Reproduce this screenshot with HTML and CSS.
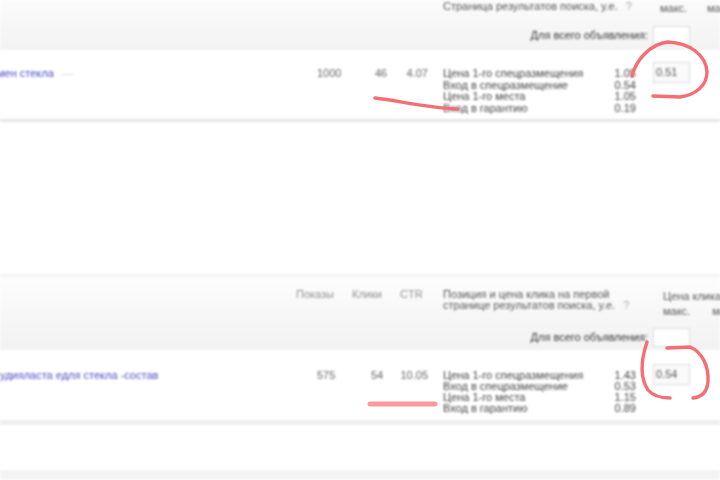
FILE: index.html
```html
<!DOCTYPE html>
<html>
  <head>
    <title>Объявления</title>
    <link rel="stylesheet" href="styles.css">
  </head>
  <body>
    <div class="page">
      <div class="blurred">
        <!-- first group -->
        <div class="head head-short">
          <div class="cols cols-first">
            <div class="pos-title">Страница результатов поиска, у.е. <span class="hint">?</span></div>
            <div class="max-cell">макс.</div>
            <div class="max-cell">макс.</div>
          </div>
          <div class="all-ads">Для всего объявления: <span class="box"></span></div>
        </div>
        <div class="row row-first">
          <div class="ad-link">мен стекла <span class="tag">—</span></div>
          <div class="num">1000</div>
          <div class="num clicks">46</div>
          <div class="num ctr">4.07</div>
          <ul class="prices">
            <li><span>Цена 1-го спецразмещения</span><span>1.05</span></li>
            <li><span>Вход в спецразмещение</span><span>0.54</span></li>
            <li><span>Цена 1-го места</span><span>1.05</span></li>
            <li><span>Вход в гарантию</span><span>0.19</span></li>
          </ul>
          <div class="bid">0.51</div>
        </div>
        <div class="gap"></div>
        <!-- second group -->
        <div class="head head-full">
          <div class="cols cols-second">
            <div class="col-name col-shows">Показы</div>
            <div class="col-name">Клики</div>
            <div class="col-name">CTR</div>
            <div class="pos-title">Позиция и цена клика на первой<br>странице результатов поиска, у.е. <span class="hint">?</span></div>
            <div class="price-title">Цена клика<br><span class="max-cell">макс.</span><span class="max-cell max-next">макс.</span></div>
          </div>
          <div class="all-ads">Для всего объявления: <span class="box"></span></div>
        </div>
        <div class="row row-second">
          <div class="ad-link">удияласта едля стекла -состав</div>
          <div class="num">575</div>
          <div class="num">54</div>
          <div class="num ctr">10.05</div>
          <ul class="prices">
            <li><span>Цена 1-го спецразмещения</span><span>1.43</span></li>
            <li><span>Вход в спецразмещение</span><span>0.53</span></li>
            <li><span>Цена 1-го места</span><span>1.15</span></li>
            <li><span>Вход в гарантию</span><span>0.89</span></li>
          </ul>
          <div class="bid">0.54</div>
        </div>
        <div class="gap gap-last"></div>
        <div class="foot"></div>
      </div>

      <!-- red pen marks drawn on top of the screenshot -->
      <svg class="marks" width="720" height="480" viewBox="0 0 720 480">
        <path d="M375 98 C400 101 430 108 458 109" />
        <path d="M632 76 C636 60 650 44 668 42 C690 43 706 55 707 72 C707 86 695 95 680 97 L653 96" />
        <path class="thick" d="M370 404 L435 404" />
        <path d="M647 342 C641 360 640 378 648 390 C654 397 662 398 670 398" />
        <path d="M667 348 L690 347 C702 352 709 366 708 382 C707 392 702 397 693 398" />
      </svg>
    </div>
  </body>
</html>
```

FILE: styles.css
```css
html,
body {
  margin: 0;
  padding: 0;
  background: #fff;
}

.page {
  position: relative;
  width: 720px;
  height: 480px;
  overflow: hidden;
  font-family: "Liberation Sans", Arial, sans-serif;
  font-size: 11px;
  line-height: 11px;
  color: #555;
}

.blurred {
  filter: blur(1px);
}

.head {
  box-sizing: border-box;
}

.head-short {
  height: 50px;
  background: linear-gradient(#fbfbfb, #f3f3f3);
}

.head-full {
  height: 73px;
  padding-top: 12px;
  background: linear-gradient(#fdfdfd, #f2f2f2);
}

.cols {
  display: grid;
  align-items: start;
  white-space: nowrap;
}

.cols-first {
  grid-template-columns: 660px 47px 13px;
  height: 26px;
  padding-top: 3px;
  box-sizing: border-box;
}

.cols-first .pos-title {
  margin-top: -2px;
  padding-left: 443px;
}

.cols-second {
  grid-template-columns: 352px 48px 43px 220px 57px;
  height: 39px;
}

.col-name {
  color: #8f8f8f;
}

.col-shows {
  padding-left: 296px;
}

.hint {
  display: inline-block;
  margin-left: 5px;
  color: #aaa;
}

.price-title {
  line-height: 15px;
}

.max-cell {
  color: #555;
}

.max-next {
  margin-left: 22px;
}

.all-ads {
  display: flex;
  justify-content: flex-end;
  align-items: center;
  gap: 5px;
  padding-right: 30px;
  color: #333;
}

.box {
  display: block;
  box-sizing: border-box;
  width: 37px;
  height: 19px;
  background: #fff;
  border: 1px solid #ddd;
}

.row {
  display: grid;
  grid-template-columns: 317px 54px 29px 43px 210px 37px;
  align-items: start;
  box-sizing: border-box;
  height: 72px;
  padding-top: 18px;
  background: #fff;
  border-bottom: 3px solid #e6e6e6;
}

.row-second {
  height: 75px;
  padding-top: 20px;
  border-bottom: 5px solid #efefef;
}

.ad-link {
  color: #4c4cc4;
  white-space: nowrap;
}

.row-first .ad-link {
  margin-left: -3px;
}

.tag {
  margin-left: 5px;
  color: #d5d5d5;
}

.num {
  color: #666;
}

.clicks {
  padding-left: 4px;
}

.ctr {
  width: 28px;
  text-align: right;
  white-space: nowrap;
}

.prices {
  margin: 0;
  padding: 0;
  list-style: none;
  white-space: nowrap;
  color: #444;
}

.row-first .prices {
  line-height: 11.5px;
}

.prices li {
  display: flex;
  justify-content: space-between;
  padding-right: 17px;
}

.bid {
  box-sizing: border-box;
  height: 21px;
  margin-top: -6px;
  padding-left: 2px;
  border: 1px solid #dcdcdc;
  background: #fafafa;
  color: #555;
  line-height: 19px;
}

.gap {
  height: 152px;
  background: #fff;
  border-bottom: 3px solid #f3f3f3;
  box-sizing: content-box;
}

.gap-last {
  height: 45px;
  border-bottom: 0;
}

.foot {
  height: 10px;
  background: #f4f4f4;
}

.marks {
  position: absolute;
  left: 0;
  top: 0;
  filter: blur(0.7px);
}

.marks path {
  fill: none;
  stroke: #f56e74;
  stroke-width: 3.4;
  stroke-linecap: round;
}

.marks .thick {
  stroke: #fb9a9e;
  stroke-width: 5;
}
```
